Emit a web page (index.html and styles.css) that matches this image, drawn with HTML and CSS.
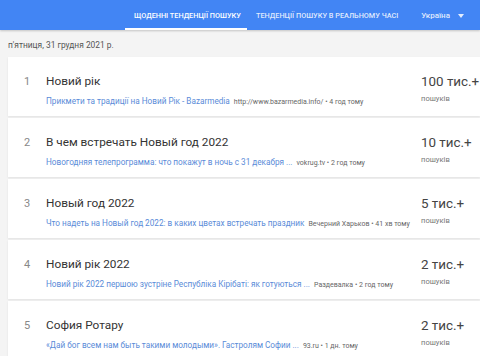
FILE: index.html
```html
<!DOCTYPE html>
<html lang="uk">
<head>
<meta charset="utf-8">
<link rel="stylesheet" href="styles.css">
</head>
<body>
<header class="topbar">
  <nav class="tabs">
    <div class="tab active">Щоденні тенденції пошуку</div>
    <div class="tab">Тенденції пошуку в реальному часі</div>
  </nav>
  <div class="geo">Україна <span class="caret"></span></div>
</header>
<main class="content">
  <div class="date">п'ятниця, 31 грудня 2021 р.</div>
  <div class="list">
    <div class="card">
      <div class="rank">1</div>
      <div class="details">
        <div class="title">Новий рік</div>
        <div class="sub"><span class="link">Прикмети та традиції на Новий Рік - Bazarmedia</span><span class="src">http://www.bazarmedia.info/ • 4 год тому</span></div>
      </div>
      <div class="count"><div class="num">100 тис.+</div><div class="lbl">пошуків</div></div>
    </div>
    <div class="card">
      <div class="rank">2</div>
      <div class="details">
        <div class="title">В чем встречать Новый год 2022</div>
        <div class="sub"><span class="link">Новогодняя телепрограмма: что покажут в ночь с 31 декабря ...</span><span class="src">vokrug.tv • 2 год тому</span></div>
      </div>
      <div class="count"><div class="num">10 тис.+</div><div class="lbl">пошуків</div></div>
    </div>
    <div class="card">
      <div class="rank">3</div>
      <div class="details">
        <div class="title">Новый год 2022</div>
        <div class="sub"><span class="link">Что надеть на Новый год 2022: в каких цветах встречать праздник</span><span class="src">Вечерний Харьков • 41 хв тому</span></div>
      </div>
      <div class="count"><div class="num">5 тис.+</div><div class="lbl">пошуків</div></div>
    </div>
    <div class="card">
      <div class="rank">4</div>
      <div class="details">
        <div class="title">Новий рік 2022</div>
        <div class="sub"><span class="link">Новий рік 2022 першою зустріне Республіка Кірібаті: як готуються ...</span><span class="src">Раздевалка • 2 год тому</span></div>
      </div>
      <div class="count"><div class="num">2 тис.+</div><div class="lbl">пошуків</div></div>
    </div>
    <div class="card">
      <div class="rank">5</div>
      <div class="details">
        <div class="title">София Ротару</div>
        <div class="sub"><span class="link">«Дай бог всем нам быть такими молодыми». Гастролям Софии ...</span><span class="src">93.ru • 1 дн. тому</span></div>
      </div>
      <div class="count"><div class="num">2 тис.+</div><div class="lbl">пошуків</div></div>
    </div>
  </div>
</main>
</body>
</html>
```

FILE: styles.css
```css
html, body {
  margin: 0;
  padding: 0;
  overflow: hidden;
}
body {
  width: 480px;
  height: 356px;
  background: #f4f4f4;
  font-family: Roboto, "Noto Sans", sans-serif;
  color: #333;
}
.topbar {
  height: 30px;
  background: #4285f4;
  display: flex;
  align-items: stretch;
  box-shadow: 0 1px 2px rgba(0,0,0,0.2);
}
.tabs {
  display: flex;
  margin-left: 125px;
}
.tab {
  color: rgba(255,255,255,0.85);
  font-size: 7.3px;
  font-weight: 500;
  text-transform: uppercase;
  display: flex;
  align-items: center;
  padding: 2px 8px 0 9px;
  box-sizing: border-box;
  border-bottom: 2px solid transparent;
  white-space: nowrap;
}
.tab.active {
  color: #fff;
  border-bottom-color: #fff;
  width: 122px;
}
.geo {
  margin-left: auto;
  margin-right: 16px;
  color: rgba(255,255,255,0.85);
  font-size: 8px;
  font-weight: 500;
  display: flex;
  align-items: center;
  white-space: nowrap;
  padding-top: 1px;
}
.caret {
  display: inline-block;
  margin-left: 8px;
  width: 0;
  height: 0;
  border-left: 3px solid transparent;
  border-right: 3px solid transparent;
  border-top: 4px solid rgba(255,255,255,0.85);
}
.content {
  padding: 0 0 0 8px;
}
.date {
  height: 27px;
  line-height: 31px;
  font-size: 8.4px;
  color: #555;
}
.list {
  width: 472px;
  display: flex;
  flex-direction: column;
  gap: 2px;
}
.card {
  background: #fff;
  height: 59px;
  box-shadow: 0 1px 2px rgba(0,0,0,0.08);
  display: flex;
  align-items: flex-start;
  padding-top: 17px;
  box-sizing: border-box;
}
.rank {
  width: 38px;
  padding-left: 16px;
  box-sizing: border-box;
  font-size: 11px;
  line-height: 15px;
  color: #888;
}
.details {
  width: 375px;
  overflow: hidden;
  white-space: nowrap;
}
.title {
  font-size: 11.8px;
  line-height: 15px;
  color: #333;
}
.sub {
  margin-top: 4px;
  line-height: 11px;
  white-space: nowrap;
}
.link {
  font-size: 8.2px;
  color: #5a8bd8;
}
.src {
  font-size: 7px;
  color: #666;
  margin-left: 4px;
}
.count {
  width: 59px;
  white-space: nowrap;
}
.num {
  font-size: 13.4px;
  line-height: 15px;
  color: #444;
  white-space: nowrap;
}
.lbl {
  margin-top: 4px;
  line-height: 11px;
  font-size: 7.6px;
  color: #777;
}
```
